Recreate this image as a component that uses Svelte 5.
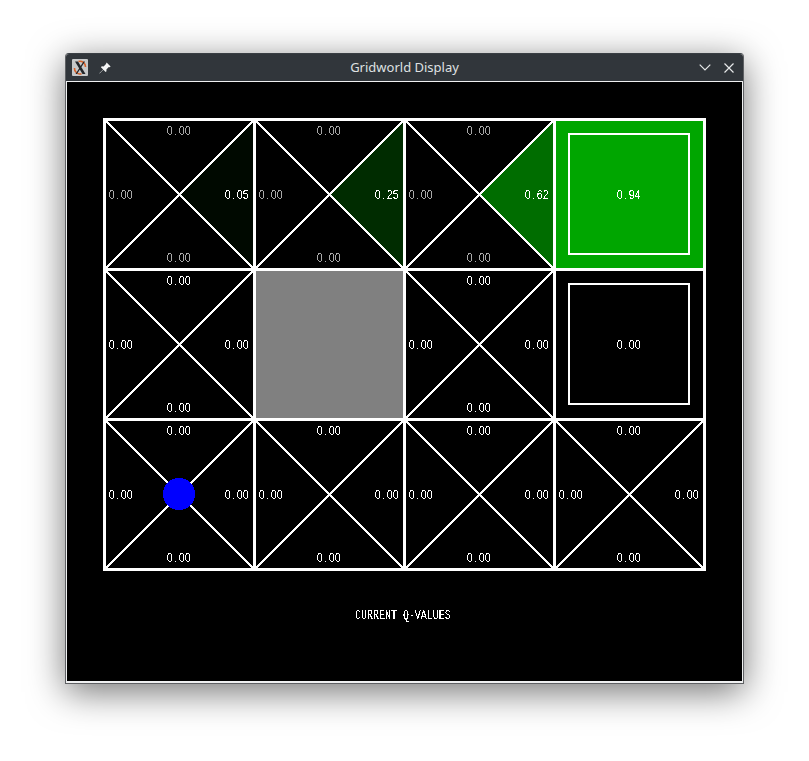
<script lang="ts">
	type Cell = {
		kind: 'q' | 'wall' | 'exit';
		q?: number[]; // north, east, south, west
		value?: number;
		agent?: boolean;
		dim?: boolean;
	};

	const zero = [0, 0, 0, 0];

	const cells: Cell[] = [
		{ kind: 'q', q: [0, 0.05, 0, 0], dim: true },
		{ kind: 'q', q: [0, 0.25, 0, 0], dim: true },
		{ kind: 'q', q: [0, 0.62, 0, 0], dim: true },
		{ kind: 'exit', value: 0.94 },
		{ kind: 'q', q: zero },
		{ kind: 'wall' },
		{ kind: 'q', q: zero },
		{ kind: 'exit', value: 0 },
		{ kind: 'q', q: zero, agent: true },
		{ kind: 'q', q: zero },
		{ kind: 'q', q: zero },
		{ kind: 'q', q: zero }
	];

	const SIZE = 150;
	const maxValue = 0.94;
	const gridLines = [0, 1, 2, 3, 4];

	// the display scales green against the largest value on the board
	function green(v: number) {
		return `rgb(0, ${Math.round((v / maxValue) * 166)}, 0)`;
	}

	const labelPos = [
		{ x: 62, y: 15.5 },
		{ x: 120, y: 79.5 },
		{ x: 62, y: 142.5 },
		{ x: 4, y: 79.5 }
	];

	const wedges = [
		'0,0 150,0 75,75',
		'150,0 150,150 75,75',
		'0,150 150,150 75,75',
		'0,0 0,150 75,75'
	];

	const charX = '0.3 8.700 14.200 21.200';
</script>

{#snippet label(x: number, y: number, v: number, dim = false)}
	<g transform="translate({x} {y}) scale(.86 1)">
		<text class="val" class:dim x={charX}>{v.toFixed(2)}</text>
	</g>
{/snippet}

<svg width="0" height="0" class="defs" aria-hidden="true">
	<filter id="bitmap" color-interpolation-filters="sRGB" x="-5%" y="-20%" width="110%" height="140%">
		<feComponentTransfer>
			<feFuncA type="discrete" tableValues="0 0 1 1" />
		</feComponentTransfer>
	</filter>
</svg>

<div class="window">
	<header class="titlebar">
		<div class="tools">
			<span class="app-icon">
				<svg width="16" height="17" viewBox="0 0 16 17">
					<rect width="16" height="17" rx="1" fill="#c6c8c9" />
					<path d="M2.500 9a5.500 5.500 0 0 0 7 5.800M13.500 8a5.500 5.500 0 0 0-7-5.500" fill="none" stroke="#d8622a" stroke-width="1.600" />
					<path d="M3 2.500h3l7.500 12.500h-3zM11.500 2.500h1.500L5 15H3.500z" fill="#23262a" />
				</svg>
			</span>
			<svg class="pin" width="12" height="12" viewBox="0 0 12 12">
				<path d="M7.600.4l4 4-.9.9-.9-.3-2.400 2.400.1 1.800-.9.900-2.200-2.300L.6 11.600l-.3-.3 3.900-3.900-2.300-2.200.9-.9 1.800.1L7 2z" fill="#f4f5f5" />
			</svg>
		</div>
		<span class="title">Gridworld Display</span>
		<div class="controls">
			<svg width="12" height="7" viewBox="0 0 12 7">
				<path d="M.7.700L6 6l5.300-5.300" fill="none" stroke="#e6e8e9" stroke-width="1.200" />
			</svg>
			<svg width="10" height="10" viewBox="0 0 10 10">
				<path d="M.5.500l9 9M9.500.500l-9 9" fill="none" stroke="#e6e8e9" stroke-width="1.200" />
			</svg>
		</div>
	</header>

	<main class="display">
		<svg class="board" width="603" height="453" viewBox="0 0 603 453">
			{#each cells as cell, i}
				<g transform="translate({1.5 + (i % 4) * SIZE} {1.5 + Math.floor(i / 4) * SIZE})">
					{#if cell.kind === 'wall'}
						<rect width={SIZE} height={SIZE} fill="#808080" />
					{:else if cell.kind === 'exit'}
						<rect width={SIZE} height={SIZE} fill={green(cell.value ?? 0)} />
						<rect x="14" y="14" width="120" height="120" fill="none" stroke="#fff" stroke-width="2" />
						{@render label(62, 79.5, cell.value ?? 0)}
					{:else}
						{#each cell.q ?? [] as v, d}
							{#if v > 0}
								<polygon points={wedges[d]} fill={green(v)} />
							{/if}
						{/each}
						<line x1="0" y1="0" x2={SIZE} y2={SIZE} class="diag" />
						<line x1={SIZE} y1="0" x2="0" y2={SIZE} class="diag" />
						{#each cell.q ?? [] as v, d}
							{@render label(labelPos[d].x, labelPos[d].y, v, cell.dim && v === 0)}
						{/each}
						{#if cell.agent}
							<circle cx="74.500" cy="74.500" r="16" fill="#0000ff" />
						{/if}
					{/if}
				</g>
			{/each}

			{#each gridLines as n}
				<line class="grid" x1={1.5 + n * SIZE} y1="0" x2={1.5 + n * SIZE} y2="453" />
			{/each}
			{#each gridLines.slice(0, 4) as n}
				<line class="grid" x1="0" y1={1.5 + n * SIZE} x2="603" y2={1.5 + n * SIZE} />
			{/each}
		</svg>

		<svg class="caption" width="100" height="16" viewBox="0 0 100 16">
			<text class="cap" transform="translate(0 11) scale(.74 1)">CURRENT Q-VALUES</text>
		</svg>
	</main>
</div>

<style>
	:global(body) {
		background: #ffffff;
	}

	:global(#app) {
		padding: 53px 0 77px 65px;
	}

	.defs {
		position: absolute;
	}

	.window {
		box-sizing: border-box;
		width: 679px;
		height: 631px;
		display: flex;
		flex-direction: column;
		background: #eff0f1;
		border: 1px solid #5f6164;
		border-top-color: #3a3f44;
		border-radius: 4px 4px 0 0;
		box-shadow: 0 8px 36px rgba(0, 0, 0, 0.55);
	}

	.titlebar {
		flex: 0 0 27px;
		display: flex;
		align-items: center;
		justify-content: space-between;
		position: relative;
		background: #31363b;
		border-radius: 3px 3px 0 0;
		padding: 0 9px 0 6px;
	}

	.tools,
	.controls {
		display: flex;
		align-items: center;
	}

	.tools {
		gap: 11px;
	}

	.controls {
		gap: 13px;
	}

	.app-icon {
		display: flex;
	}

	.pin {
		display: block;
	}

	.title {
		position: absolute;
		left: 0;
		right: 0;
		top: 4px;
		text-align: center;
		font-family: 'Noto Sans', sans-serif;
		font-size: 13px;
		line-height: 18px;
		color: #dfe1e2;
		pointer-events: none;
	}

	.display {
		flex: 0 0 599px;
		margin: 1px 1px 0;
		background: #000;
		display: flex;
		flex-direction: column;
		align-items: center;
		padding-top: 36px;
		box-sizing: border-box;
	}

	.board {
		display: block;
		shape-rendering: crispEdges;
	}

	.caption {
		display: block;
		margin: 37px 0 0 0;
	}

	.diag {
		stroke: #fff;
		stroke-width: 2;
	}

	.grid {
		stroke: #fff;
		stroke-width: 3;
	}

	.val {
		font-family: 'Liberation Sans', sans-serif;
		font-size: 12.5px;
		fill: #fff;
		filter: url(#bitmap);
	}

	.dim {
		fill: #a8a8a8;
	}

	.cap {
		font-family: 'Liberation Mono', monospace;
		font-size: 13.5px;
		fill: #fff;
		filter: url(#bitmap);
	}
</style>
